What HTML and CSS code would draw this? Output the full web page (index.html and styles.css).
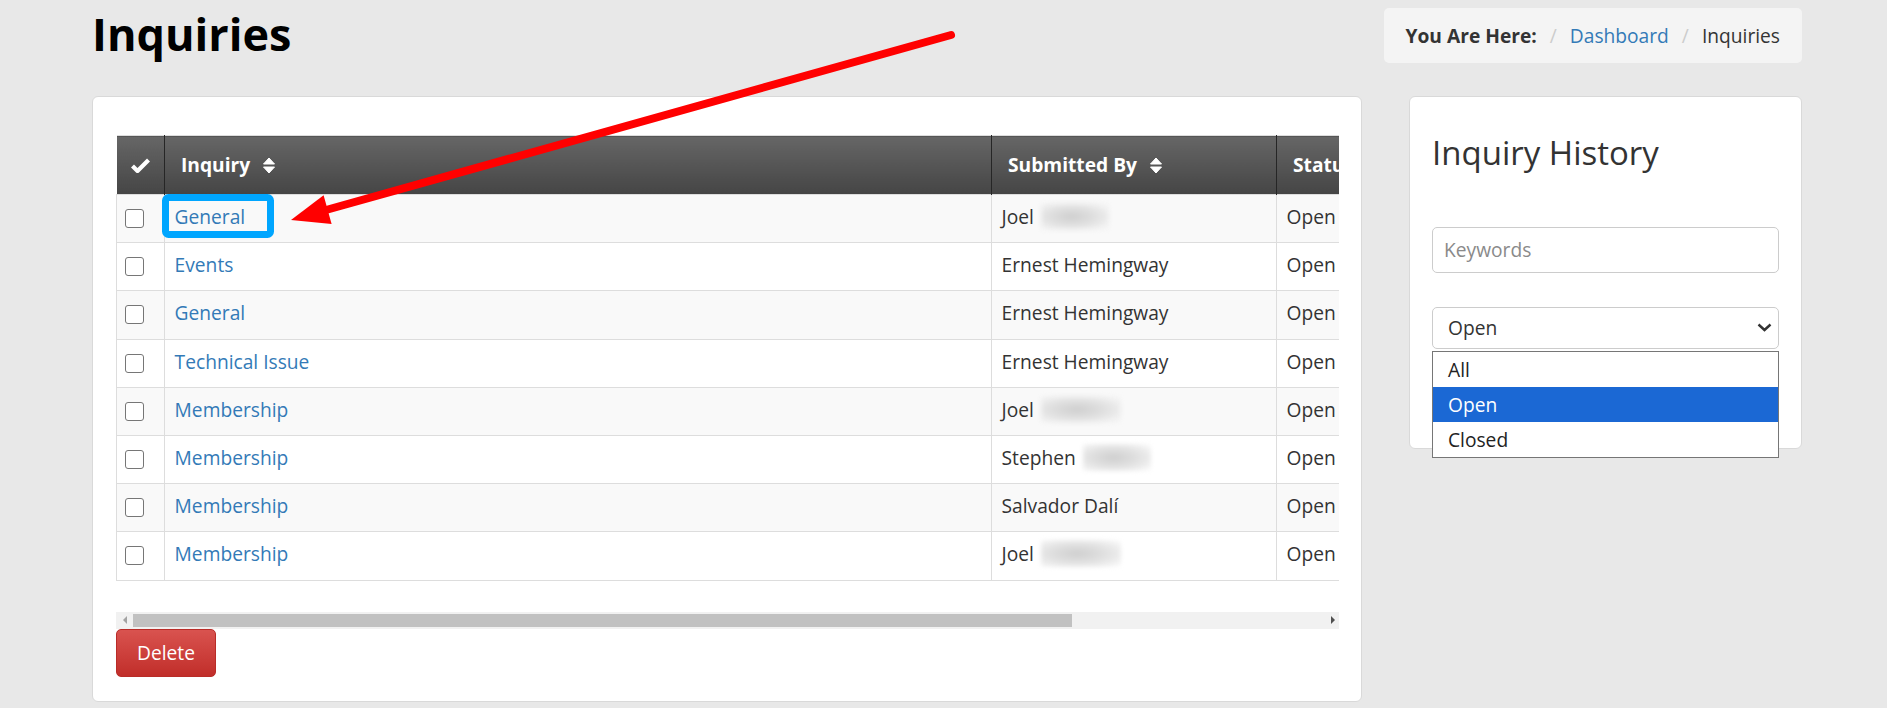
FILE: index.html
```html
<!DOCTYPE html>
<html lang="en">
<head>
    <meta charset="UTF-8">
    <meta name="viewport" content="width=device-width, initial-scale=1.0">
    <title>Inquiries</title>
    <link rel="stylesheet" href="styles.css">
</head>
<body>

<div class="page">
    <div class="page-header">
        <h1>Inquiries</h1>
        <ol class="breadcrumb">
            <li class="crumb-label">You Are Here:</li>
            <li class="sep">/</li>
            <li><a href="#">Dashboard</a></li>
            <li class="sep">/</li>
            <li>Inquiries</li>
        </ol>
    </div>

    <div class="layout">
        <!-- Inquiry list -->
        <section class="card main-card">
            <div class="table-wrap">
                <table class="inquiry-table">
                    <thead>
                        <tr>
                            <th class="col-check">
                                <svg class="check-icon" width="19" height="15" viewBox="0 0 19 15"><path d="M1.5 8 L6.5 13 L17.5 2" fill="none" stroke="#fff" stroke-width="4.2" stroke-linejoin="round"/></svg>
                            </th>
                            <th class="col-inquiry">Inquiry <svg class="sort-icon" width="12" height="17" viewBox="0 0 12 17"><path d="M6 1 L11.5 7 L0.5 7 Z M0.5 10 L11.5 10 L6 16 Z" fill="#fff" stroke="#fff" stroke-width="1" stroke-linejoin="round"/></svg></th>
                            <th class="col-by">Submitted By <svg class="sort-icon" width="12" height="17" viewBox="0 0 12 17"><path d="M6 1 L11.5 7 L0.5 7 Z M0.5 10 L11.5 10 L6 16 Z" fill="#fff" stroke="#fff" stroke-width="1" stroke-linejoin="round"/></svg></th>
                            <th class="col-status">Status</th>
                            <th class="col-date">Submitted On</th>
                        </tr>
                    </thead>
                    <tbody>
                        <tr>
                            <td class="check-cell"><input type="checkbox"></td>
                            <td><a href="#">General</a></td>
                            <td>Joel <span class="blurred"></span></td>
                            <td>Open</td>
                            <td>03/14/2024</td>
                        </tr>
                        <tr>
                            <td class="check-cell"><input type="checkbox"></td>
                            <td><a href="#">Events</a></td>
                            <td>Ernest Hemingway</td>
                            <td>Open</td>
                            <td>03/12/2024</td>
                        </tr>
                        <tr>
                            <td class="check-cell"><input type="checkbox"></td>
                            <td><a href="#">General</a></td>
                            <td>Ernest Hemingway</td>
                            <td>Open</td>
                            <td>03/10/2024</td>
                        </tr>
                        <tr>
                            <td class="check-cell"><input type="checkbox"></td>
                            <td><a href="#">Technical Issue</a></td>
                            <td>Ernest Hemingway</td>
                            <td>Open</td>
                            <td>03/08/2024</td>
                        </tr>
                        <tr>
                            <td class="check-cell"><input type="checkbox"></td>
                            <td><a href="#">Membership</a></td>
                            <td>Joel <span class="blurred wide"></span></td>
                            <td>Open</td>
                            <td>03/02/2024</td>
                        </tr>
                        <tr>
                            <td class="check-cell"><input type="checkbox"></td>
                            <td><a href="#">Membership</a></td>
                            <td>Stephen <span class="blurred"></span></td>
                            <td>Open</td>
                            <td>02/27/2024</td>
                        </tr>
                        <tr>
                            <td class="check-cell"><input type="checkbox"></td>
                            <td><a href="#">Membership</a></td>
                            <td>Salvador Dalí</td>
                            <td>Open</td>
                            <td>02/21/2024</td>
                        </tr>
                        <tr>
                            <td class="check-cell"><input type="checkbox"></td>
                            <td><a href="#">Membership</a></td>
                            <td>Joel <span class="blurred wide"></span></td>
                            <td>Open</td>
                            <td>02/19/2024</td>
                        </tr>
                    </tbody>
                </table>
            </div>

            <!-- horizontal scrollbar of the table -->
            <div class="scrollbar">
                <span class="scroll-btn"><span class="tri-left"></span></span>
                <div class="scroll-track"><div class="scroll-thumb"></div></div>
                <span class="scroll-btn"><span class="tri-right"></span></span>
            </div>

            <button class="btn-delete" type="button">Delete</button>
        </section>

        <!-- Filters -->
        <aside class="card side-card">
            <h3>Inquiry History</h3>
            <input class="field" type="text" placeholder="Keywords">
            <div class="select-box">
                <div class="select">
                    <span>Open</span>
                    <svg width="15" height="9" viewBox="0 0 15 9"><path d="M1.5 1.5 L7.5 7 L13.5 1.5" fill="none" stroke="#333" stroke-width="2.4"/></svg>
                </div>
                <ul class="select-menu">
                    <li>All</li>
                    <li class="selected">Open</li>
                    <li>Closed</li>
                </ul>
            </div>
        </aside>
    </div>

    <!-- annotation drawn over the screenshot -->
    <svg class="annotation" width="1887" height="708" viewBox="0 0 1887 708">
        <rect x="165.5" y="197.5" width="105" height="37" rx="3" fill="none" stroke="#00a6ff" stroke-width="7"/>
        <line x1="951" y1="35" x2="326" y2="210" stroke="#ff0000" stroke-width="8" stroke-linecap="round"/>
        <polygon points="291,220 323.6,195.3 331.6,224.1" fill="#ff0000"/>
    </svg>
</div>

</body>
</html>
```

FILE: styles.css
```css
body {
    font-family: "Open Sans", "Noto Sans", sans-serif;
    font-size: 19.2px;
    line-height: 1.42857;
    color: #333;
    margin: 0;
    padding: 0;
    background-color: #e8e8e8;
}
a {
    color: #337ab7;
    text-decoration: none;
}
.page {
    position: relative;
    padding: 8px 85px 0 92px;
    height: 700px;
}
.page-header {
    display: flex;
    justify-content: space-between;
    align-items: flex-start;
}
h1 {
    margin: 1px 0 0;
    font-size: 45px;
    font-weight: 700;
    line-height: 1.1;
    color: #000;
}
.breadcrumb {
    display: flex;
    list-style: none;
    margin: 0;
    padding: 14px 22px;
    background-color: #f4f4f4;
    border-radius: 5px;
}
.crumb-label {
    font-weight: 700;
}
.breadcrumb .sep {
    color: #ccc;
    margin: 0 13px;
}
.layout {
    display: flex;
    gap: 47px;
    margin-top: 33px;
    align-items: flex-start;
}
.card {
    background-color: white;
    border: 1px solid #d9d9d9;
    border-radius: 6px;
}
.main-card {
    flex: 1;
    min-width: 0;
    padding: 38px 22px 24px 23px;
}
.side-card {
    width: 393px;
    flex-shrink: 0;
    box-sizing: border-box;
    padding: 24px 22px 99px 22px;
}
.table-wrap {
    overflow: hidden;
    padding-bottom: 31px;
}
.inquiry-table {
    width: 1550px;
    table-layout: fixed;
    border-collapse: collapse;
    border-top: 1px solid #ddd;
}
.col-check { width: 48px; }
.col-inquiry { width: 827px; }
.col-by { width: 285px; }
.col-status { width: 130px; }
.col-date { width: 260px; }
th {
    box-sizing: border-box;
    padding: 15px 16px;
    text-align: left;
    font-weight: 700;
    color: white;
    white-space: nowrap;
    background: linear-gradient(#666, #454545);
}
th + th {
    border-left: 1px solid #262626;
}
th.col-check {
    padding: 15px 0;
    text-align: center;
}
.check-icon {
    vertical-align: -1px;
}
.sort-icon {
    margin-left: 8px;
    vertical-align: -2px;
}
td {
    padding: 8px 9.6px 11.8px;
    border: 1px solid #ddd;
    white-space: nowrap;
    overflow: hidden;
}
tbody tr:nth-child(odd) td {
    background-color: #f9f9f9;
}
.check-cell {
    padding: 9.9px 0 9.9px 8px;
}
.check-cell input {
    appearance: none;
    display: block;
    width: 19px;
    height: 19px;
    margin: 0;
    box-sizing: border-box;
    border: 1.5px solid #767676;
    border-radius: 3px;
    background: white;
}
.blurred {
    display: inline-block;
    width: 68px;
    height: 27px;
    vertical-align: top;
    margin-left: 2px;
    background: radial-gradient(ellipse at 45% 50%, #cfcfcf 0%, #dedede 40%, #efefef 75%, rgba(249,249,249,0) 100%);
    filter: blur(2px);
}
.blurred.wide {
    width: 80px;
}
.scrollbar {
    display: flex;
    height: 17px;
    background-color: #f1f1f1;
}
.scroll-btn {
    width: 17px;
    display: flex;
    align-items: center;
    justify-content: center;
}
.tri-left {
    border-top: 4px solid transparent;
    border-bottom: 4px solid transparent;
    border-right: 4px solid #a3a3a3;
}
.tri-right {
    border-top: 4px solid transparent;
    border-bottom: 4px solid transparent;
    border-left: 4px solid #505050;
    margin-left: 4px;
}
.scroll-track {
    flex: 1;
    padding-top: 2px;
}
.scroll-thumb {
    width: 79%;
    height: 13px;
    background-color: #c1c1c1;
}
.btn-delete {
    display: block;
    padding: 9.6px 20px;
    font-family: inherit;
    font-size: 19.2px;
    line-height: 1.42857;
    color: white;
    background: linear-gradient(#d9534f, #c12e2a);
    border: 1px solid #b92c28;
    border-radius: 5px;
    cursor: pointer;
}
.side-card h3 {
    margin: 14px 0 55px;
    font-size: 33px;
    font-weight: 400;
    line-height: 1.1;
    color: #333;
}
.field {
    display: block;
    width: 100%;
    box-sizing: border-box;
    height: 46px;
    padding: 0 11px;
    font-family: inherit;
    font-size: 19.2px;
    color: #333;
    border: 1px solid #ccc;
    border-radius: 5px;
}
.field::placeholder {
    color: #8a8a8a;
}
.select-box {
    position: relative;
    margin-top: 34px;
}
.select {
    display: flex;
    justify-content: space-between;
    align-items: center;
    height: 42px;
    box-sizing: border-box;
    padding: 0 6px 0 15px;
    border: 1px solid #ccc;
    border-radius: 5px;
    background: white;
}
.select-menu {
    position: absolute;
    top: 44px;
    left: 0;
    right: 0;
    margin: 0;
    padding: 0;
    list-style: none;
    background: white;
    border: 1px solid #767676;
}
.select-menu li {
    height: 35px;
    line-height: 35px;
    padding: 0 15px;
    color: #222;
}
.select-menu li.selected {
    background-color: #1b68d4;
    color: white;
}
.annotation {
    position: absolute;
    left: 0;
    top: 0;
    pointer-events: none;
}
```
